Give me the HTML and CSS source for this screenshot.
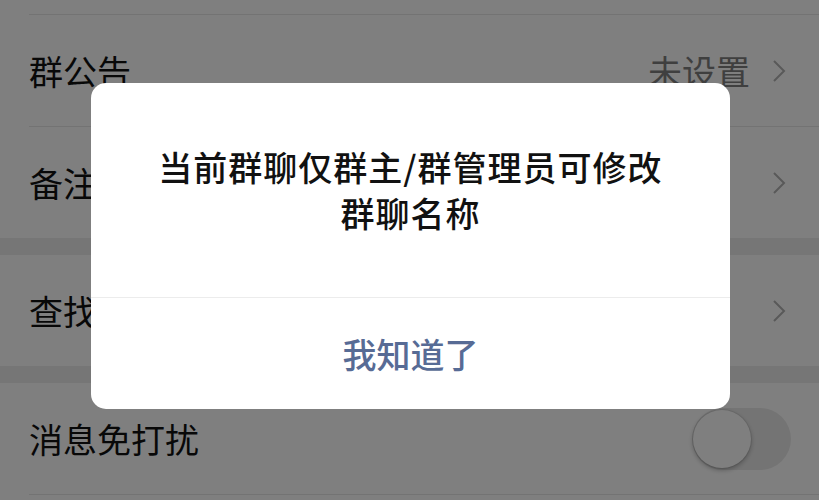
FILE: index.html
```html
<!DOCTYPE html>
<html lang="zh-CN">
<head>
<meta charset="utf-8">
<title>群聊信息</title>
<link rel="stylesheet" href="styles.css">
</head>
<body>
<div class="screen">
  <div class="group">
    <div class="stub"></div>
    <div class="row">
      <span class="label">群公告</span>
      <span class="value">未设置</span>
      <svg class="chev" viewBox="0 0 14 24" width="14" height="24"><polyline points="2,2 12,12 2,22" fill="none" stroke="#b2b2b2" stroke-width="2"/></svg>
    </div>
    <div class="row last">
      <span class="label">备注</span>
      <span class="value"></span>
      <svg class="chev" viewBox="0 0 14 24" width="14" height="24"><polyline points="2,2 12,12 2,22" fill="none" stroke="#b2b2b2" stroke-width="2"/></svg>
    </div>
  </div>
  <div class="gap"></div>
  <div class="group">
    <div class="row last">
      <span class="label">查找聊天记录</span>
      <span class="value"></span>
      <svg class="chev" viewBox="0 0 14 24" width="14" height="24"><polyline points="2,2 12,12 2,22" fill="none" stroke="#b2b2b2" stroke-width="2"/></svg>
    </div>
  </div>
  <div class="gap"></div>
  <div class="group grow">
    <div class="row">
      <span class="label">消息免打扰</span>
      <span class="value"></span>
      <span class="switch"><span class="knob"></span></span>
    </div>
  </div>

  <div class="mask"></div>
  <div class="dialog">
    <div class="dialog-body">
      <p class="dialog-title">当前群聊仅群主/群管理员可修改<br>群聊名称</p>
    </div>
    <div class="dialog-foot">
      <button class="dialog-btn">我知道了</button>
    </div>
  </div>
</div>
</body>
</html>
```

FILE: styles.css
```css
* { box-sizing: border-box; }
html, body { margin: 0; padding: 0; }
body {
  width: 819px;
  height: 500px;
  overflow: hidden;
  font-family: "PingFang SC", "Noto Sans CJK SC", "Noto Sans", sans-serif;
}
.screen {
  position: relative;
  width: 819px;
  height: 500px;
  display: flex;
  flex-direction: column;
  background: #ffffff;
}
.group { background: #ffffff; }
.group.grow { flex: 1; }
.stub {
  height: 15px;
  margin-left: 29px;
  border-bottom: 1px solid #e6e6e6;
}
.row {
  height: 112px;
  margin-left: 29px;
  padding-right: 28px;
  display: flex;
  align-items: center;
  border-bottom: 1px solid #e6e6e6;
}
.row.last { height: 111px; border-bottom: none; }
.label {
  font-size: 34px;
  color: #111111;
  white-space: nowrap;
}
.value {
  flex: 1;
  text-align: right;
  font-size: 34px;
  color: #7f7f7f;
  margin-right: 22px;
}
.chev { margin-right: 5px; flex: none; }
.gap { height: 17px; background: #ededed; flex: none; }

.switch {
  width: 99px;
  height: 62px;
  border-radius: 31px;
  background: #e9e9e9;
  display: flex;
  align-items: center;
  padding-left: 1px;
  flex: none;
}
.knob {
  width: 58px;
  height: 58px;
  border-radius: 50%;
  background: #ffffff;
  box-shadow: 0 2px 5px rgba(0, 0, 0, 0.3), 0 0 0 1px rgba(0, 0, 0, 0.06);
}

.mask {
  position: absolute;
  inset: 0;
  background: rgba(0, 0, 0, 0.5);
}
.dialog {
  position: absolute;
  left: 91px;
  top: 83px;
  width: 639px;
  height: 326px;
  background: #ffffff;
  border-radius: 15px;
  display: flex;
  flex-direction: column;
  overflow: hidden;
}
.dialog-body {
  height: 215px;
  display: flex;
  align-items: center;
  justify-content: center;
  border-bottom: 1px solid #ececec;
}
.dialog-title {
  margin: 0;
  text-align: center;
  font-size: 34px;
  line-height: 46px;
  letter-spacing: 1px;
  font-weight: 500;
  color: #111111;
}
.dialog-foot {
  flex: 1;
  display: flex;
}
.dialog-btn {
  flex: 1;
  border: none;
  background: transparent;
  font-family: inherit;
  font-size: 34px;
  font-weight: 500;
  color: #576b95;
  padding: 0;
}
```
